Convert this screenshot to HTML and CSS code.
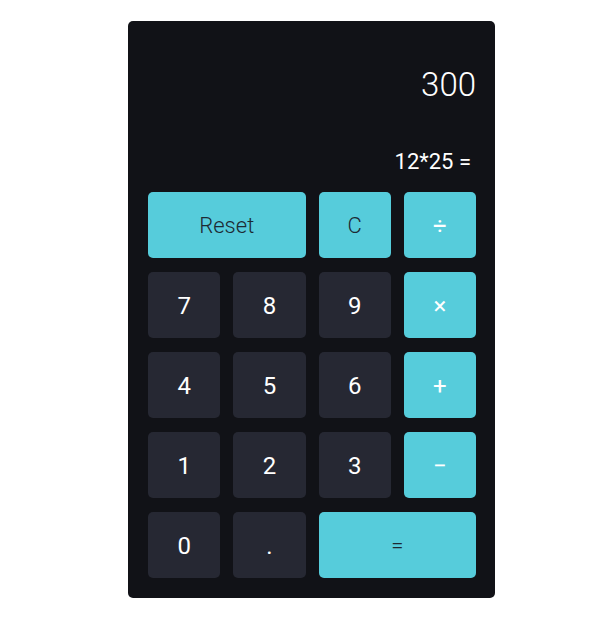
FILE: index.html
```html
<!DOCTYPE html>
<html lang="en">
<head>
<meta charset="utf-8">
<title>Calculator</title>
<link rel="stylesheet" href="styles.css">
</head>
<body>
<div class="calc">
  <div class="display">
    <div class="result">300</div>
    <div class="expr">12*25 =</div>
  </div>
  <div class="keys">
    <button class="key accent wide dark-text">Reset</button>
    <button class="key accent dark-text">C</button>
    <button class="key accent">÷</button>
    <button class="key">7</button>
    <button class="key">8</button>
    <button class="key">9</button>
    <button class="key accent">×</button>
    <button class="key">4</button>
    <button class="key">5</button>
    <button class="key">6</button>
    <button class="key accent">+</button>
    <button class="key">1</button>
    <button class="key">2</button>
    <button class="key">3</button>
    <button class="key accent">−</button>
    <button class="key">0</button>
    <button class="key">.</button>
    <button class="key accent wide dark-text">=</button>
  </div>
</div>
</body>
</html>
```
FILE: styles.css
```css
html, body {
  margin: 0;
  padding: 0;
  background: #ffffff;
}
body {
  font-family: Roboto, "Liberation Sans", sans-serif;
}
.calc {
  box-sizing: border-box;
  width: 367px;
  height: 577px;
  margin: 21px 0 0 128px;
  padding: 20px 19px 20px 20px;
  background: #111217;
  border-radius: 5px;
}
.display {
  height: 151px;
  text-align: right;
  color: #ffffff;
}
.result {
  padding-top: 24px;
  font-size: 33px;
  font-weight: 300;
  line-height: 40px;
}
.expr {
  margin-top: 44px;
  padding-right: 5px;
  font-size: 22px;
  line-height: 26px;
}
.keys {
  display: grid;
  grid-template-columns: repeat(4, 1fr);
  grid-auto-rows: 66px;
  column-gap: 13px;
  row-gap: 14px;
  width: 328px;
}
.key {
  display: flex;
  align-items: center;
  justify-content: center;
  border: none;
  border-radius: 5px;
  background: #262833;
  color: #ffffff;
  font-family: Roboto, "Liberation Sans", sans-serif;
  font-size: 24px;
  font-weight: 400;
  padding: 2px 0 0 0;
  margin: 0;
}
.accent {
  background: #56ccdb;
}
.wide {
  grid-column: span 2;
}
.dark-text {
  color: #1d2a33;
  font-size: 22px;
  font-weight: 300;
  padding-top: 0;
}
```
